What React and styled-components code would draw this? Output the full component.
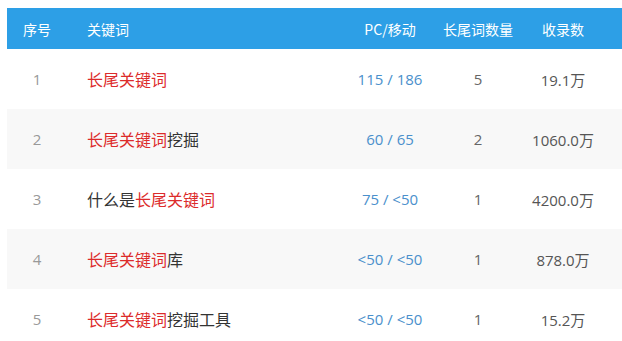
import React from "react";
import styled, { createGlobalStyle } from "styled-components";

const Global = createGlobalStyle`
  html, body { margin: 0; padding: 0; background: #fff; }
  body { font-family: "Segoe UI", "Open Sans", "Noto Sans CJK SC", sans-serif; }
`;

const Wrap = styled.div`
  padding: 8px 0 0 7px;
  width: 615px;
`;

const cols = "60px 278px 90px 86px 84px 1fr";

const Header = styled.div`
  display: grid;
  grid-template-columns: ${cols};
  height: 41px;
  align-items: center;
  background: #2d9fe6;
  color: #fff;
  font-size: 14px;
  font-family: "Noto Sans CJK SC", sans-serif;
`;

const Row = styled.div`
  display: grid;
  grid-template-columns: ${cols};
  height: 60px;
  align-items: center;
  background: ${(p) => (p.$alt ? "#f8f8f8" : "#fff")};
  font-size: 15px;
`;

const Cell = styled.div`
  text-align: ${(p) => (p.$left ? "left" : "center")};
  padding-left: ${(p) => (p.$left ? "20px" : "0")};
  color: ${(p) => p.$color || "inherit"};
  white-space: nowrap;
`;

const Kw = styled.span`
  font-family: "Noto Sans CJK SC", sans-serif;
  font-size: 16px;
  color: #333;
`;

const Hl = styled.span`
  color: #dc2b2b;
`;

const data = [
  { n: 1, pre: "", post: "", pc: "115 / 186", cnt: 5, inc: "19.1万" },
  { n: 2, pre: "", post: "挖掘", pc: "60 / 65", cnt: 2, inc: "1060.0万" },
  { n: 3, pre: "什么是", post: "", pc: "75 / <50", cnt: 1, inc: "4200.0万" },
  { n: 4, pre: "", post: "库", pc: "<50 / <50", cnt: 1, inc: "878.0万" },
  { n: 5, pre: "", post: "挖掘工具", pc: "<50 / <50", cnt: 1, inc: "15.2万" },
];

export default function App() {
  return (
    <Wrap>
      <Global />
      <Header>
        <Cell>序号</Cell>
        <Cell $left>关键词</Cell>
        <Cell>PC/移动</Cell>
        <Cell>长尾词数量</Cell>
        <Cell>收录数</Cell>
        <Cell />
      </Header>
      {data.map((d, i) => (
        <Row key={d.n} $alt={i % 2 === 1}>
          <Cell $color="#999">{d.n}</Cell>
          <Cell $left>
            <Kw>
              {d.pre}
              <Hl>长尾关键词</Hl>
              {d.post}
            </Kw>
          </Cell>
          <Cell $color="#4a90cc">{d.pc}</Cell>
          <Cell $color="#666">{d.cnt}</Cell>
          <Cell $color="#555">{d.inc}</Cell>
          <Cell />
        </Row>
      ))}
    </Wrap>
  );
}
